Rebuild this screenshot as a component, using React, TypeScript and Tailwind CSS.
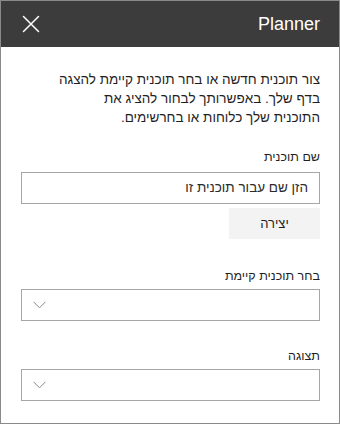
function Label({ children }: { children: React.ReactNode }) {
  return <div className="text-[12.5px] leading-[19px] text-[#1f1f1f]">{children}</div>;
}

function Select() {
  return (
    <div dir="ltr" className="h-[32px] border border-[#a6a6a6] bg-white flex items-center justify-start pl-[11px]">
      <svg width="13" height="8" viewBox="0 0 13 8" className="text-[#8a8a8a]">
        <polyline points="0.5,0.8 6.5,6.8 12.5,0.8" fill="none" stroke="currentColor" strokeWidth="1" />
      </svg>
    </div>
  );
}

export default function App() {
  return (
    <div className="w-[340px] h-[424px] border border-[#8a8a8a] bg-white flex flex-col font-['Liberation_Sans','DejaVu_Sans',sans-serif]">
      <div className="h-[46px] bg-[#3c3c3c] flex items-center justify-between pl-[21px] pr-[19px] shrink-0">
        <svg width="18" height="18" viewBox="0 0 18 18" className="text-white">
          <path d="M1.5 1.5 L16.5 16.5 M16.5 1.5 L1.5 16.5" stroke="currentColor" strokeWidth="1.5" strokeLinecap="round" />
        </svg>
        <span className="text-white text-[18px] leading-none">Planner</span>
      </div>
      <div dir="rtl" className="pr-[19px] pl-5 pt-[23px] text-right">
        <p className="text-[13.5px] leading-[19px] text-[#1f1f1f]">
          צור תוכנית חדשה או בחר תוכנית קיימת להצגה
          <br />
          בדף שלך. באפשרותך לבחור להציג את
          <br />
          התוכנית שלך כלוחות או בחרשימים.
        </p>
        <div className="mt-[21px]">
          <Label>שם תוכנית</Label>
        </div>
        <div className="mt-[5px] h-[32px] border border-[#a6a6a6] flex items-center pr-[11px] text-[13.5px] text-[#2b2b2b]">
          הזן שם עבור תוכנית זו
        </div>
        <div className="mt-[4px] flex">
          <button className="w-[91px] h-[31px] bg-[#f3f3f3] text-[13px] text-[#1f1f1f]">יצירה</button>
        </div>
        <div className="mt-[28px]">
          <Label>בחר תוכנית קיימת</Label>
        </div>
        <div className="mt-[3px]">
          <Select />
        </div>
        <div className="mt-[26px]">
          <Label>תצוגה</Label>
        </div>
        <div className="mt-[3px]">
          <Select />
        </div>
      </div>
    </div>
  );
}
